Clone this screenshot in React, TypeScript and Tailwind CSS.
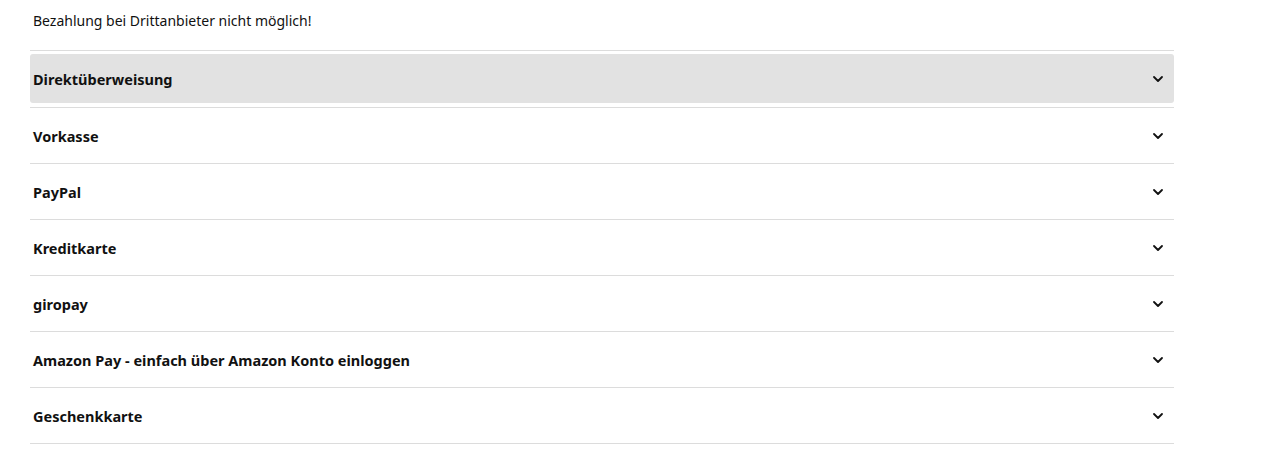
import { ChevronDown } from 'lucide-react';

const methods = [
  'Direktüberweisung',
  'Vorkasse',
  'PayPal',
  'Kreditkarte',
  'giropay',
  'Amazon Pay - einfach über Amazon Konto einloggen',
  'Geschenkkarte',
];

export default function App() {
  return (
    <div className="min-h-[469px] bg-white pl-[30px] text-[#111] font-['Noto_Sans',sans-serif]">
      <div className="w-[1144px]">
        <p className="h-[50px] pl-[3px] pt-[10px] text-[14px] leading-[22px]">
          Bezahlung bei Drittanbieter nicht möglich!
        </p>

        <div className="border-t border-[#dcdcdc]">
          {methods.map((name, i) => (
            <div
              key={name}
              className={`border-b border-[#dcdcdc] pt-[3px] ${i === 0 ? 'pb-[4px]' : 'pb-[3px]'}`}
            >
              <button
                className={`flex h-[49px] w-full items-center justify-between rounded-[3px] pl-[3px] pr-[8px] text-left ${
                  i === 0 ? 'bg-[#e2e2e2]' : ''
                }`}
              >
                <span className="text-[14.5px] font-bold leading-[22px]">{name}</span>
                <ChevronDown className="h-[16px] w-[16px]" strokeWidth={2.75} />
              </button>
            </div>
          ))}
        </div>
      </div>
    </div>
  );
}
